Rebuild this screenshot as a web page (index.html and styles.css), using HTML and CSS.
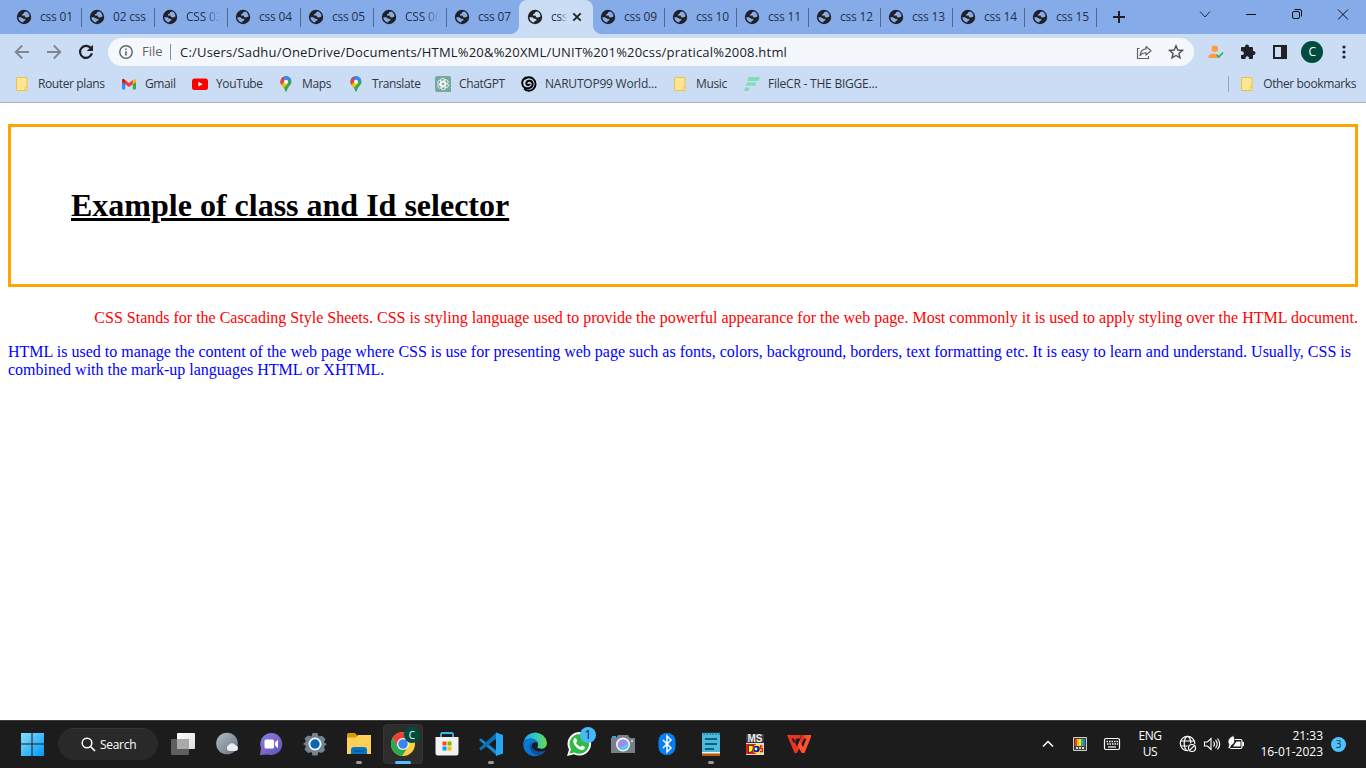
FILE: index.html
```html
<!DOCTYPE html>
<html lang="en">
<head>
<meta charset="utf-8">
<title>css 08</title>
<link rel="stylesheet" href="styles.css">
</head>
<body>
<svg class="defs" width="0" height="0">
  <defs>
    <symbol id="globe" viewBox="0 0 16 16"><circle cx="8" cy="8" r="7.200" fill="#202124"/><path d="M10.300 2.600L8 3.200 7.800 4.600 6 5.200 6.300 6.700 8.500 6.500 9.300 8.200 11.200 8.500 13.500 7.600C13.500 5.200 12.200 3.500 10.300 2.600ZM2.300 8.300C2.500 11.100 4.500 13.300 7.200 13.600L7.700 12 9.600 11.300 9.200 9.900 6.600 9.600 5.400 8.300Z" fill="currentColor"/></symbol>
    <symbol id="folder" viewBox="0 0 16 16"><path d="M2.500 1.500H13V14.500H2.500Z" fill="#ffe592" stroke="#e9c44d"/><path d="M11.200 14.500V11.200H13.500V14.500Z" fill="#ffe592" stroke="#e9c44d" stroke-width=".8"/></symbol>
    <symbol id="pin" viewBox="0 0 16 16"><clipPath id="pinclip"><path d="M8 .2a5.500 5.500 0 0 0-5.500 5.500C2.500 9.300 6.300 10.400 7.200 15Q8 16.500 8.800 15C9.700 10.400 13.500 9.300 13.500 5.700A5.500 5.500 0 0 0 8 .2Z"/></clipPath><g clip-path="url(#pinclip)"><path d="M0 0H16V16H0Z" fill="#34a853"/><path d="M0 12L11.500 0H0Z" fill="#1a73e8"/><path d="M0 1H5L8 5 3 10 0 9Z" fill="#ea4335"/><path d="M3 9.500L7 5 10 7.500 5 13Z" fill="#fbbc04"/><path d="M6 0H12L13 3 9 7 6 5Z" fill="#4285f4"/></g><circle cx="8" cy="5.700" r="2" fill="#fff"/></symbol>
  </defs>
</svg>
<header class="browser">
  <div class="tabstrip">
    <div class="tab"><svg class="ico"><use href="#globe"/></svg><span>css 01</span></div>
    <div class="tab"><svg class="ico"><use href="#globe"/></svg><span>02 css</span></div>
    <div class="tab"><svg class="ico"><use href="#globe"/></svg><span class="fade">CSS 03</span></div>
    <div class="tab"><svg class="ico"><use href="#globe"/></svg><span>css 04</span></div>
    <div class="tab"><svg class="ico"><use href="#globe"/></svg><span>css 05</span></div>
    <div class="tab"><svg class="ico"><use href="#globe"/></svg><span class="fade">CSS 06</span></div>
    <div class="tab before-active"><svg class="ico"><use href="#globe"/></svg><span>css 07</span></div>
    <div class="tab active"><svg class="ico"><use href="#globe"/></svg><span class="fade">css</span><svg class="close" width="10" height="10" viewBox="0 0 10 10"><path d="M1.300 1.300L8.700 8.700M8.700 1.300L1.300 8.700" stroke="#202124" stroke-width="1.800"/></svg></div>
    <div class="tab narrow"><svg class="ico"><use href="#globe"/></svg><span>css 09</span></div>
    <div class="tab narrow"><svg class="ico"><use href="#globe"/></svg><span>css 10</span></div>
    <div class="tab narrow"><svg class="ico"><use href="#globe"/></svg><span>css 11</span></div>
    <div class="tab narrow"><svg class="ico"><use href="#globe"/></svg><span>css 12</span></div>
    <div class="tab narrow"><svg class="ico"><use href="#globe"/></svg><span>css 13</span></div>
    <div class="tab narrow"><svg class="ico"><use href="#globe"/></svg><span>css 14</span></div>
    <div class="tab narrow"><svg class="ico"><use href="#globe"/></svg><span>css 15</span></div>
    <svg class="newtab" width="12" height="12" viewBox="0 0 12 12"><path d="M6 0V12M0 6H12" stroke="#202124" stroke-width="2"/></svg>
    <div class="winbtns">
      <svg width="46" height="28"><path d="M18 11.500L23 17 28 11.500" fill="none" stroke="#1b2a40"/></svg>
      <svg width="46" height="28"><path d="M18 14.500H28" stroke="#111"/></svg>
      <svg width="46" height="28"><rect x="18.500" y="11.500" width="7" height="7" rx="1.500" fill="none" stroke="#111"/><path d="M20.500 9.500H26Q27.500 9.500 27.500 11V16.500" fill="none" stroke="#111"/></svg>
      <svg width="46" height="28"><path d="M18 9.500L28 19.500M28 9.500L18 19.500" stroke="#111"/></svg>
    </div>
  </div>
  <div class="toolbar">
    <svg class="nav" viewBox="0 0 16 16"><path d="M15 8H2M8.200 1.500L1.700 8 8.200 14.500" fill="none" stroke="#7f8796" stroke-width="1.800"/></svg>
    <svg class="nav" viewBox="0 0 16 16"><path d="M1 8H14M7.800 1.500L14.300 8 7.800 14.500" fill="none" stroke="#7f8796" stroke-width="1.800"/></svg>
    <svg class="nav" viewBox="0 0 16 16"><path d="M13.200 4.800A6 6 0 1 0 13.900 9.200" fill="none" stroke="#202124" stroke-width="2.200"/><path d="M15 .8V7H8.800Z" fill="#202124"/></svg>
    <div class="omnibox">
      <svg class="info" width="14" height="14" viewBox="0 0 14 14"><circle cx="7" cy="7" r="6.200" fill="none" stroke="#5f6368" stroke-width="1.400"/><path d="M7 6.200V10.500M7 3.400V5" stroke="#5f6368" stroke-width="1.600"/></svg>
      <span class="scheme">File</span>
      <span class="url">C:/Users/Sadhu/OneDrive/Documents/HTML%20&amp;%20XML/UNIT%201%20css/pratical%2008.html</span>
      <svg class="share" width="16" height="16" viewBox="0 0 16 16"><path d="M3.500 4.500H1.500V14.500H12.500V12" fill="none" stroke="#5f6368" stroke-width="1.200"/><path d="M10 2.500L15 6.800 10 11V8.800Q6.500 8.500 4 11.500 4.800 5.500 10 4.900Z" fill="none" stroke="#5f6368" stroke-width="1.200" stroke-linejoin="round"/></svg>
      <svg class="star" width="16" height="16" viewBox="0 0 16 16"><path d="M8 1.800L9.800 6 14.400 6.400 10.900 9.400 12 13.900 8 11.500 4 13.900 5.100 9.400 1.600 6.400 6.200 6Z" fill="none" stroke="#4d5156" stroke-width="1.400"/></svg>
    </div>
    <div class="actions">
      <svg width="16" height="16" viewBox="0 0 16 16"><circle cx="6.800" cy="4.800" r="3.300" fill="#ff9d3d"/><path d="M.5 14V12.500Q.5 9.500 6.800 9.500L10.500 14Z" fill="#ff9d3d"/><path d="M8.500 10.500L10.800 13 15 8.500" fill="none" stroke="#21b15a" stroke-width="1.600"/></svg>
      <svg width="16" height="16" viewBox="0 0 16 16"><path d="M1 4Q1 3 2 3H5V2.500A2 2 0 0 1 9 2.500V3H12Q13 3 13 4V7H13.500A2 2 0 0 1 13.500 11H13V14Q13 15 12 15H9V14A1.700 1.700 0 0 0 5.500 14V15H2Q1 15 1 14V11H2A1.800 1.800 0 0 0 2 7.300H1Z" fill="#202124"/></svg>
      <svg width="16" height="16" viewBox="0 0 16 16"><path d="M1 1H15V15H1ZM3 3V13H9V3Z" fill="#202124" fill-rule="evenodd"/></svg>
      <span class="avatar">C</span>
      <svg width="16" height="16" viewBox="0 0 16 16"><g fill="#202124"><circle cx="8" cy="3" r="1.600"/><circle cx="8" cy="8" r="1.600"/><circle cx="8" cy="13" r="1.600"/></g></svg>
    </div>
  </div>
  <nav class="bookmarks">
    <a class="bm w107"><svg class="ico"><use href="#folder"/></svg>Router plans</a>
    <a class="bm w71"><svg class="ico" viewBox="0 0 16 16"><path d="M1 3.500L4.200 5.500V13.500H2Q1 13.500 1 12.500Z" fill="#4285f4"/><path d="M15 3.500L11.800 5.500V13.500H14Q15 13.500 15 12.500Z" fill="#34a853"/><path d="M11.800 4.500L13.500 3Q15 2.500 15 4.500V6L11.800 8.300Z" fill="#fbbc04"/><path d="M1 6V4.500Q1 2.300 2.800 3L8 7 11.800 4.100V8.300L8 11 4.200 8.300Z" fill="#ea4335"/><path d="M1 6V4.500Q1 2.500 2.500 3L4.200 4.300V8.300Z" fill="#c5221f"/></svg>Gmail</a>
    <a class="bm w86"><svg class="ico" viewBox="0 0 16 16"><rect y="2.500" width="16" height="11.500" rx="2.500" fill="#f00"/><path d="M6.400 5.800L10.600 8.200 6.400 10.600Z" fill="#fff"/></svg>YouTube</a>
    <a class="bm w70"><svg class="ico"><use href="#pin"/></svg>Maps</a>
    <a class="bm w87"><svg class="ico"><use href="#pin"/></svg>Translate</a>
    <a class="bm w86"><svg class="ico" viewBox="0 0 16 16"><path d="M2 0H14Q16 0 16 2V16H2Q0 16 0 14V2Q0 0 2 0Z" fill="#75a99c"/><g fill="none" stroke="#fff" stroke-width=".8"><rect x="5.500" y="2.300" width="4.400" height="8" rx="2.200"/><rect x="5.500" y="2.300" width="4.400" height="8" rx="2.200" transform="rotate(60 8 8)"/><rect x="5.500" y="2.300" width="4.400" height="8" rx="2.200" transform="rotate(120 8 8)"/><rect x="5.500" y="2.300" width="4.400" height="8" rx="2.200" transform="rotate(180 8 8)"/><rect x="5.500" y="2.300" width="4.400" height="8" rx="2.200" transform="rotate(240 8 8)"/><rect x="5.500" y="2.300" width="4.400" height="8" rx="2.200" transform="rotate(300 8 8)"/></g></svg>ChatGPT</a>
    <a class="bm wide w151"><svg class="ico" viewBox="0 0 16 16"><path d="M3.200 3.200A6.700 6.700 0 1 1 3 12.600" fill="none" stroke="#000" stroke-width="1.900"/><path d="M5 1.300C.5 3.200.2 9 3.200 11.200 6.500 13.400 11.800 11.700 11.700 7.800 11.300 4 6.200 3.700 5.300 7 5 9.300 8.200 10 8.800 7.800" fill="none" stroke="#000" stroke-width="1.900"/></svg>NARUTOP99 World...</a>
    <a class="bm w72"><svg class="ico"><use href="#folder"/></svg>Music</a>
    <a class="bm wide"><svg class="ico" viewBox="0 0 16 16"><path d="M4.500 1H16L14.500 5H3ZM3 6.500H12.500L11 9.800H1.500ZM1.200 11.500H6L4.500 15H0Z" fill="#82dcb9"/></svg>FileCR - THE BIGGE...</a>
    <a class="bm other"><svg class="ico"><use href="#folder"/></svg>Other bookmarks</a>
  </nav>
</header>
<main class="page">
  <h1 class="title">Example of class and Id selector</h1>
  <p class="intro">CSS Stands for the Cascading Style Sheets. CSS is styling language used to provide the powerful appearance for the web page. Most commonly it is used to apply styling over the HTML document.</p>
  <p class="detail">HTML is used to manage the content of the web page where CSS is use for presenting web page such as fonts, colors, background, borders, text formatting etc. It is easy to learn and understand. Usually, CSS is combined with the mark-up languages HTML or XHTML.</p>
</main>
<footer class="taskbar">
  <div class="app"><svg width="24" height="24" viewBox="0 0 24 24"><defs><linearGradient id="win" x1="0" y1="0" x2="24" y2="24" gradientUnits="userSpaceOnUse"><stop stop-color="#8ae4ff"/><stop offset="1" stop-color="#0098f8"/></linearGradient></defs><path d="M1 1H11.500V11.500H1ZM12.500 1H24V11.500H12.500ZM1 12.500H11.500V24H1ZM12.500 12.500H24V24H12.500Z" fill="url(#win)"/></svg></div>
  <div class="search"><svg width="15" height="15" viewBox="0 0 15 15"><circle cx="6" cy="6" r="4.800" fill="none" stroke="#fff" stroke-width="1.500"/><path d="M9.500 9.500L14 14" stroke="#fff" stroke-width="1.700"/></svg><span>Search</span></div>
  <div class="app"><svg width="24" height="24" viewBox="0 0 24 24"><defs><linearGradient id="tv" x2="1" y2="1"><stop stop-color="#fff"/><stop offset="1" stop-color="#ddd"/></linearGradient></defs><rect x="6" y="1" width="18" height="16" rx="1" fill="url(#tv)"/><rect x="0" y="7" width="18" height="16" rx="1" fill="#5f5f5f"/><path d="M6 7H18V17H6Z" fill="#aaa"/></svg></div>
  <div class="app"><svg width="24" height="24" viewBox="0 0 24 24"><defs><linearGradient id="moon" x2="1" y2="1"><stop stop-color="#b2bdc9"/><stop offset="1" stop-color="#64717e"/></linearGradient></defs><circle cx="12" cy="11.500" r="10.800" fill="url(#moon)"/><path d="M14 19A3.300 3.300 0 0 1 14 12.800 4 4 0 0 1 20.500 13.200 3 3 0 0 1 21 19Z" fill="#e9edf1"/></svg></div>
  <div class="app"><svg width="24" height="24" viewBox="0 0 24 24"><defs><linearGradient id="chat" x2="1" y2="1"><stop stop-color="#7983e4"/><stop offset=".5" stop-color="#8265c4"/><stop offset="1" stop-color="#4f57c5"/></linearGradient></defs><path d="M12.500 1A11 11 0 1 1 9 22.500L1 23 2 16A11 11 0 0 1 12.500 1Z" fill="url(#chat)"/><rect x="5.500" y="7.500" width="9.500" height="9" rx="1.500" fill="#fff"/><path d="M16 10.500L19 7.700V16.300L16 13.500Z" fill="#fff"/></svg></div>
  <div class="app"><svg width="24" height="24" viewBox="0 0 24 24"><path d="M9.500 1H14.500L15.500 4.500 19 3.800 22.500 7 21 10.500 24 12 21 14.500 22 18.500 18.500 21 15.500 20 14.500 23.500H9.500L8.500 20 5 21 1.500 17.500 3 14 0 12 3 9.500 1.500 6.500 5 3.500 8.500 4.500Z" fill="#758390"/><circle cx="12" cy="12" r="6.500" fill="#f4f7fa"/><circle cx="12" cy="12" r="4.700" fill="#0c64b4"/></svg></div>
  <div class="app running"><svg width="24" height="24" viewBox="0 0 24 24"><path d="M0 2.500Q0 1 1.500 1H8L10.500 4V8H0Z" fill="#d99a06"/><path d="M0 5.500H9L11 3H24V22H0Z" fill="#ffd057"/><path d="M4 22V18Q4 15 7 15H17Q20 15 20 18V22Z" fill="#0874c9"/><path d="M7.500 19H16.500" stroke="#035895" stroke-width="1.500"/></svg></div>
  <div class="app current"><svg width="26" height="26" viewBox="0 0 26 26"><circle cx="13" cy="13" r="12" fill="#ffcd40"/><path d="M2.600 7A12 12 0 0 1 23.400 7H13L7.800 16Z" fill="#e94335"/><path d="M2.600 7A12 12 0 0 0 12 25L18 16 8 16Z" fill="#28a850"/><circle cx="13" cy="13" r="6" fill="#fff"/><circle cx="13" cy="13" r="4.800" fill="#3b82f4"/></svg><b class="profile">C</b></div>
  <div class="app"><svg width="24" height="24" viewBox="0 0 24 24"><path d="M6 6V2.200Q6 1 7.200 1H16.800Q18 1 18 2.200V6" fill="none" stroke="#35b9f1" stroke-width="1.800"/><path d="M.5 5H23.500V21Q23.500 23.500 21 23.500H3Q.5 23.500 .5 21Z" fill="#f2f2f2"/><path d="M7.500 9.500H11.500V13.500H7.500Z" fill="#f25022"/><path d="M12.500 9.500H16.500V13.500H12.500Z" fill="#7fba00"/><path d="M7.500 14.500H11.500V18.500H7.500Z" fill="#00a4ef"/><path d="M12.500 14.500H16.500V18.500H12.500Z" fill="#ffb900"/></svg></div>
  <div class="app running"><svg width="24" height="24" viewBox="0 0 24 24"><path d="M2 6.500L18 19V23.800L0 8Z" fill="#1687d2"/><path d="M0 16.500L17.500 .5V6.500L2 18.500Z" fill="#0872b9"/><path d="M17 .5L24 3V21.500L17 24Z" fill="#27a4f2"/></svg></div>
  <div class="app"><svg width="26" height="26" viewBox="0 0 26 26"><defs><linearGradient id="edge"><stop stop-color="#1ca4e8"/><stop offset=".5" stop-color="#32c7c7"/><stop offset="1" stop-color="#6ed847"/></linearGradient></defs><path d="M1.500 11A11.900 11.900 0 0 1 25 12C25 17 20 19 16 17 14.800 16.300 16.300 15.500 16 12.500 15 7 5 6 1.500 11Z" fill="url(#edge)"/><path d="M1.200 12C3 6 14 6 16 12 11 9.500 8 14 11 18.500 14 22 20 22 23.500 19.500 19 26 10 27 5 22 2 19.500 1 16 1.200 12Z" fill="#0877d2"/><path d="M9.500 11.500C6 15 8 23 16 24.500 19 24 22 22 23.500 19.500 18 22 8.500 20.500 9.500 11.500Z" fill="#0b519c"/></svg></div>
  <div class="app"><svg width="26" height="26" viewBox="0 0 26 26"><path d="M1 25L3 18.500A11.800 11.800 0 1 1 8 23.300Z" fill="#fff"/><path d="M3.300 22.800L5 18.200A9.800 9.800 0 1 1 8.500 21.500Z" fill="#32ba48"/><path d="M8 7.500Q9.500 6.300 10.500 8L11.300 10 10 12Q11.500 14.800 14.500 16L16 14.400 19 16Q18.600 19.200 15.500 19C10.500 18 5.500 12 8 7.500Z" fill="#fff"/></svg><b class="count">1</b></div>
  <div class="app"><svg width="24" height="24" viewBox="0 0 24 24"><path d="M0 6H5L7 3H17L19 6H24V21H0Z" fill="#77818b"/><path d="M1 6V4H5V6Z" fill="#31a5e4"/><circle cx="12" cy="12.500" r="7" fill="#f3f3f7"/><circle cx="12" cy="12.500" r="5.300" fill="#9b8de7"/><path d="M8 16A5.300 5.300 0 0 0 17.200 11.500Z" fill="#5cc7ec"/><path d="M20 8H22V10H20Z" fill="#c5ced6"/></svg></div>
  <div class="app"><svg width="24" height="24" viewBox="0 0 24 24"><rect x="3.500" y="1" width="17" height="22" rx="8" fill="#087ff5"/><path d="M8 8L16 16 12 20V4L16 8 8 16" fill="none" stroke="#fff" stroke-width="1.500"/></svg></div>
  <div class="app running"><svg width="24" height="26" viewBox="0 0 24 26"><path d="M3 2H21V22H3Z" fill="#4eb9db"/><path d="M3 22H21V25H3Z" fill="#b85c13"/><path d="M3 21H21V22.500H3Z" fill="#f1f3f5"/><path d="M6 8H18M6 13H18M6 18H15" stroke="#086184" stroke-width="1.800"/><path d="M5 1V4M8 1V4M11 1V4M14 1V4M17 1V4M20 1V4" stroke="#126887"/></svg></div>
  <div class="app"><div class="dos"><span class="ms">MS</span><svg width="18" height="12" viewBox="0 0 18 12"><path d="M0 0H18V12H0Z" fill="#ddd"/><path d="M0 1H10V11H0Z" fill="#e71919"/><path d="M2.500 2.500V9.500Q8 9.500 7 2.500Z" fill="#ff0" stroke="#111" stroke-width=".7"/><circle cx="12" cy="6" r="5" fill="#ffef20"/><circle cx="10.500" cy="6" r="3.300" fill="#1818a4"/><circle cx="10" cy="6" r="1.400" fill="#fff"/><path d="M16.500 3H14.500V5.500H16.500V8.500H14" fill="none" stroke="#e71919" stroke-width="1.300"/></svg></div></div>
  <div class="app"><svg width="24" height="24" viewBox="0 0 24 24"><path d="M0 3H14.500L13 6.500H9.500L8 10 10 15 15 3H19L10 21H7.500Z" fill="#e83424"/><path d="M4.500 6.500H7L8 9 7 11.500Z" fill="#1c1c1c"/><path d="M12.500 9L16 15 19.500 6.500H17L18.500 3H24V5L17.500 21H14.800L10.500 14Z" fill="#ff5131"/></svg></div>
  <div class="tray">
    <svg class="cell" width="32" height="24"><path d="M11 14.500L16 9.500 21 14.500" fill="none" stroke="#fff" stroke-width="1.500"/></svg>
    <svg class="cell" width="32" height="24"><path d="M9.500 5.500H22.500V18.500H9.500Z" fill="#3a3f42" stroke="#d8ceb8"/><path d="M11 7H13V14H11Z" fill="#ed4432"/><path d="M13 7H15V14H13Z" fill="#ffaf19"/><path d="M15 7H17V14H15Z" fill="#efe521"/><path d="M17 7H19V14H17Z" fill="#37b64b"/><path d="M19 7H21V14H19Z" fill="#1787db"/><path d="M12 16H20" stroke="#ddd" stroke-width="2" stroke-dasharray="2 1"/></svg>
    <svg class="cell" width="32" height="24"><rect x="8.500" y="6.500" width="15" height="11" rx="1.500" fill="none" stroke="#fff" stroke-width="1.200"/><path d="M10.500 9.500H22M11 12H22" stroke="#fff" stroke-width="1.300" stroke-dasharray="1.500 1"/><path d="M12 15H20" stroke="#fff" stroke-width="1.200"/></svg>
    <div class="lang">ENG<br>US</div>
    <svg class="tray-icon" width="24" height="24" viewBox="0 0 24 24"><g fill="none" stroke="#fff" stroke-width="1.200"><circle cx="11.500" cy="11.500" r="7.200"/><ellipse cx="11.500" cy="11.500" rx="3.300" ry="7.200"/><path d="M5 9H18M5 14H12"/></g><circle cx="16" cy="16" r="4.800" fill="#1c1c1c"/><circle cx="16" cy="16" r="3.500" fill="none" stroke="#fff" stroke-width="1.200"/><path d="M13.800 18.200L18.300 13.700" stroke="#fff" stroke-width="1.200"/></svg>
    <svg class="tray-icon" width="24" height="24" viewBox="0 0 24 24"><path d="M4.500 10H7.500L11 6.500V17.500L7.500 14H4.500ZM13.500 9.500Q15.500 12 13.500 14.500M15.500 7.800Q19 12 15.500 16.200M17.500 6.500Q22 12 17.500 17.500" fill="none" stroke="#fff" stroke-width="1.100"/></svg>
    <svg class="tray-icon" width="24" height="24" viewBox="0 0 24 24"><rect x="5.500" y="7.500" width="12.500" height="9" rx="1.500" fill="none" stroke="#fff" stroke-width="1.200"/><path d="M12.500 9.500H16.500V14.500H9Z" fill="#fff"/><path d="M19.200 10V14" stroke="#fff" stroke-width="1.600"/><path d="M9.500 3.500C5 5.500 2.500 9 5 12.500L3.800 16.500H6L7.800 13C11 12 11.500 8 9.500 3.500Z" fill="#fff" stroke="#1c1c1c" stroke-width=".8"/></svg>
    <div class="clock">21:33<br>16-01-2023</div>
    <b class="alerts">3</b>
  </div>
</footer>
</body>
</html>
```
FILE: styles.css
```css
* { box-sizing: border-box; }
body { margin: 0; height: 768px; display: flex; flex-direction: column; overflow: hidden; background: #fff; font-family: "Liberation Serif", serif; }
.defs { position: absolute; }
.browser { flex: 0 0 103px; background: #cbdcf5; border-bottom: 1px solid #a5b2ca; font: 12px/16px "Open Sans", sans-serif; color: #303745; letter-spacing: -.38px; white-space: nowrap; }
.ico { width: 16px; height: 16px; flex: none; }
.tabstrip { height: 34px; display: flex; align-items: center; background: #85abe9; padding-left: 9px; color: #202b40; letter-spacing: -.2px; }
.tab { width: 73px; height: 34px; flex: none; display: flex; align-items: center; gap: 8px; padding-left: 7px; color: #85abe9; background: linear-gradient(#50698f, #50698f) right 8px / 1px 19px no-repeat; }
.tab span { color: #253149; overflow: hidden; }
.narrow { width: 72px; }
.fade { width: 34px; -webkit-mask-image: linear-gradient(90deg, #000 55%, transparent); mask-image: linear-gradient(90deg, #000 55%, transparent); }
.before-active { background: none; }
.active { width: 74px; margin-left: -1px; padding-left: 8px; background: #cbdcf5; border-radius: 8px 8px 0 0; color: #cbdcf5; position: relative; }
.active::before, .active::after { content: ""; position: absolute; bottom: 0; width: 8px; height: 8px; }
.active::before { left: -8px; background: radial-gradient(circle at 0 0, transparent 7.500px, #cbdcf5 8px); }
.active::after { right: -8px; background: radial-gradient(circle at 8px 0, transparent 7.500px, #cbdcf5 8px); }
.active .fade { width: 16px; }
.close { margin-left: -3px; }
.newtab { margin-left: 16px; flex: none; }
.winbtns { display: flex; margin-left: auto; align-self: flex-start; }
.toolbar { height: 36px; display: flex; align-items: center; padding-left: 14px; }
.nav { width: 16px; height: 16px; margin-right: 16px; flex: none; }
.nav:nth-child(3) { margin-right: 14px; }
.omnibox { width: 1086px; height: 28px; flex: none; background: #f4f8fd; border-radius: 14px; display: flex; align-items: center; padding-left: 11px; }
.scheme { width: 29px; margin-left: 9px; color: #5f6368; font-size: 13px; letter-spacing: 0; border-right: 1px solid #8b8f96; height: 16px; line-height: 15px; }
.url { margin-left: 9px; color: #202124; font-size: 13px; letter-spacing: .2px; }
.share { margin-left: auto; }
.star { margin: 0 10px 0 16px; }
.actions { display: flex; align-items: center; gap: 16px; padding-left: 14px; }
.avatar { width: 22px; height: 22px; border-radius: 50%; background: #004d40; color: #fff; text-align: center; line-height: 22px; margin: 0 -3px; }
.bookmarks { height: 32px; display: flex; align-items: center; padding: 0 10px 4px 14px; }
.bm { display: flex; align-items: center; gap: 8px; flex: none; color: #303745; }
.wide { letter-spacing: -.22px; }
.w107 { width: 107px; }
.w71 { width: 71px; }
.w86 { width: 86px; }
.w70 { width: 70px; }
.w87 { width: 87px; }
.w151 { width: 151px; }
.w72 { width: 72px; }
.other { margin-left: auto; border-left: 1px solid #91a4c4; padding-left: 10px; }
.page { flex: 1; padding: 0 8px; font-size: 16px; }
.title { margin: 21.440px 0; border: 3px solid orange; padding: 60px; font-size: 32px; line-height: 37px; text-decoration: underline; color: #000; }
.intro { color: red; text-align: right; margin: 16px 0; }
.detail { color: blue; margin: 16px 0; }
.taskbar { flex: 0 0 48px; background: #1c1c1c; border-top: 1px solid #3e3e3e; display: flex; align-items: center; padding: 0 0 1px 10px; font: 12px/16px "Open Sans", sans-serif; color: #fff; }
.app { width: 44px; height: 40px; flex: none; display: flex; align-items: center; justify-content: center; position: relative; }
.search { width: 100px; height: 32px; margin: 0 3px 0 4px; flex: none; border-radius: 16px; background: #292929; border-top: 1px solid #343434; display: flex; align-items: center; padding-left: 23px; gap: 4px; letter-spacing: -.3px; }
.running::after, .current::after { content: ""; position: absolute; bottom: 0; left: 19px; width: 6px; height: 3px; border-radius: 2px; background: #999; }
.current { width: 40px; margin: 0 2px; background: #2d2d2d; border-radius: 4px; border: 1px solid #343434; }
.current::after { left: 11px; bottom: -1px; width: 16px; background: #4cc2ff; }
.profile, .count { position: absolute; width: 16px; height: 16px; border-radius: 50%; text-align: center; font-weight: 400; }
.profile { top: 2px; left: 20px; background: #004d40; font-size: 10px; }
.count { top: 3px; left: 23px; background: #45b9fa; color: #122330; }
.dos { width: 18px; height: 21px; display: flex; flex-direction: column; }
.ms { font: bold 10px/9px "Liberation Sans", sans-serif; color: #eee; text-align: center; background: #3c3c3c; }
.tray { margin-left: auto; display: flex; align-items: center; padding-right: 20px; }
.lang { width: 44px; text-align: center; font-size: 12px; letter-spacing: -.4px; }
.tray-icon { flex: none; }
.lang + .tray-icon { margin-left: 4px; }
.clock { width: 75px; text-align: right; letter-spacing: 0; }
.alerts { margin-left: 8px; width: 15px; height: 15px; border-radius: 50%; background: #4cc2ff; color: #182a35; font-size: 10px; font-weight: 400; text-align: center; line-height: 15px; }
```
